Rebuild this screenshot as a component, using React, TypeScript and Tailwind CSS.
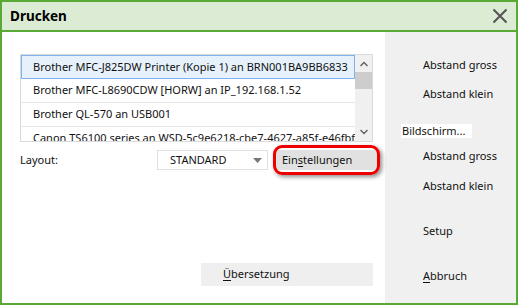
import React from "react";

const rows = [
  "Brother MFC-J825DW Printer (Kopie 1) an BRN001BA9BB6833",
  "Brother MFC-L8690CDW [HORW] an IP_192.168.1.52",
  "Brother QL-570 an USB001",
  "Canon TS6100 series an WSD-5c9e6218-cbe7-4627-a85f-e46fbf4",
];

function SideItem({ children, mt }: { children: React.ReactNode; mt: string }) {
  return (
    <div className={`h-[20px] flex items-center pl-[38px] ${mt}`}>{children}</div>
  );
}

export default function App() {
  return (
    <div
      className="w-[518px] h-[305px] border-[2px] border-[#5ba935] flex flex-col bg-white text-[11px] text-[#111]"
      style={{ fontFamily: '"Noto Sans", "Open Sans", sans-serif' }}
    >
      <div className="h-[28px] shrink-0 bg-[#dcebd3] border-b-[2px] border-[#5ba935] flex items-center justify-between pl-[8px] pr-[8px] box-content">
        <span className="text-[13.5px] font-bold text-black">Drucken</span>
        <svg width="16" height="16" viewBox="0 0 16 16" className="mr-[0px]">
          <path d="M1.5 1.5 L14.5 14.5 M14.5 1.5 L1.5 14.5" stroke="#555" strokeWidth="2" />
        </svg>
      </div>
      <div className="flex flex-1 min-h-0">
        <div className="flex-1 flex flex-col pl-[18px] pt-[22px]">
          <div className="w-[353px] h-[88px] border border-[#dadada] flex overflow-hidden">
            <div className="w-[334px] flex flex-col">
              {rows.map((r, i) => (
                <div
                  key={i}
                  className={
                    i === 0
                      ? "h-[24px] shrink-0 flex items-center pl-[11px] bg-[#e6f1fc] border border-[#7db3ea] whitespace-nowrap overflow-hidden"
                      : "h-[24px] shrink-0 flex items-center pl-[12px] border-b border-[#e6e6e6] whitespace-nowrap overflow-hidden"
                  }
                >
                  {r}
                </div>
              ))}
            </div>
            <div className="w-[17px] bg-[#f0f0f0] flex flex-col items-center">
              <svg width="10" height="17" viewBox="0 0 10 17" className="mt-[0px]">
                <path d="M1.5 11 L5 7.5 L8.5 11" stroke="#606060" strokeWidth="1.4" fill="none" />
              </svg>
              <div className="w-[17px] h-[17px] bg-[#cdcdcd]" />
              <div className="flex-1" />
              <svg width="10" height="17" viewBox="0 0 10 17">
                <path d="M1.5 6 L5 9.5 L8.5 6" stroke="#606060" strokeWidth="1.4" fill="none" />
              </svg>
            </div>
          </div>
          <div className="flex items-center h-[20px] mt-[8px]">
            <span className="w-[137px]">Layout:</span>
            <div className="w-[111px] h-[20px] border border-[#e1e1e1] flex items-center justify-between pl-[12px] pr-[5px]">
              <span>STANDARD</span>
              <svg width="9" height="5" viewBox="0 0 9 5">
                <path d="M0 0 L9 0 L4.5 5 Z" fill="#777" />
              </svg>
            </div>
            <div className="relative ml-[8px] w-[101px] h-[20px] bg-[#e1e1e1] flex items-center pl-[6px]">
              <span>
                Ein<span className="underline underline-offset-2">s</span>tellungen
              </span>
              <span className="absolute left-[-3px] right-[-3px] top-[-5px] bottom-[-5px] rounded-[9px] border-[3px] border-[#ee0000] shadow-[2px_2px_4px_rgba(0,0,0,0.45)]" />
            </div>
          </div>
          <div className="ml-[181px] mt-[93px] w-[172px] h-[23px] bg-[#efefef] flex items-center pl-[22px]">
            <span>
              <span className="underline underline-offset-2">Ü</span>bersetzung
            </span>
          </div>
        </div>
        <div className="w-[131px] bg-[#f0f0f0] flex flex-col">
          <SideItem mt="mt-[23px]">Abstand gross</SideItem>
          <SideItem mt="mt-[9px]">Abstand klein</SideItem>
          <div className="h-[20px] flex items-center pl-[16px] mt-[17px]">
            <div className="w-[71px] h-[14px] bg-white flex items-center pl-[1px]">Bildschirm...</div>
          </div>
          <SideItem mt="mt-[5px]">Abstand gross</SideItem>
          <SideItem mt="mt-[10px]">Abstand klein</SideItem>
          <SideItem mt="mt-[25px]">Setup</SideItem>
          <SideItem mt="mt-[25px]">
            <span>
              <span className="underline underline-offset-2">A</span>bbruch
            </span>
          </SideItem>
        </div>
      </div>
    </div>
  );
}
